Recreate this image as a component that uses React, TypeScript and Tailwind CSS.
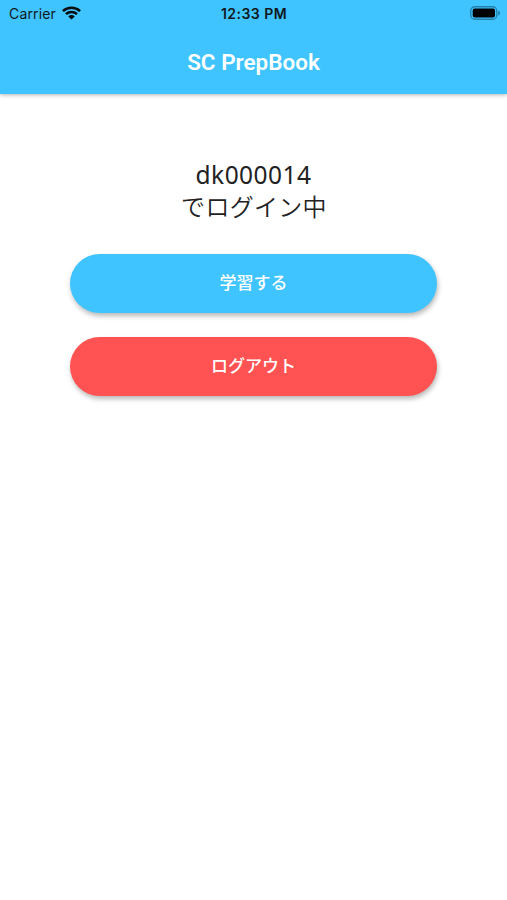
import type { ReactNode } from 'react';

function WifiIcon() {
  return (
    <svg width="19" height="14" viewBox="0 0 18 14" preserveAspectRatio="none" fill="none" stroke="#080d10" strokeWidth="2.5">
      <path d="M0.9 5.1a11.6 11.6 0 0 1 16.2 0" />
      <path d="M3.8 8.2a7.4 7.4 0 0 1 10.4 0" />
      <path d="M9 13.6L5.9 10.4a4.4 4.4 0 0 1 6.2 0z" fill="#080d10" stroke="none" />
    </svg>
  );
}

function BatteryIcon() {
  return (
    <svg width="31" height="14" viewBox="0 0 31 14" fill="none">
      <rect x="0.75" y="0.75" width="26" height="12.5" rx="4" stroke="#2380ab" strokeWidth="1.3" />
      <rect x="2.7" y="2.5" width="22.3" height="9" rx="2" fill="#000" />
      <path d="M28.2 4.4c2.4 1 2.4 4.2 0 5.2z" fill="#2380ab" />
    </svg>
  );
}

function StatusBar() {
  return (
    <div className="grid h-7 grid-cols-3 items-center pl-[9px] pr-[6px] font-['Inter','Liberation_Sans',sans-serif] text-[14px] leading-none text-[#10181d]">
      <div className="-mt-0.5 flex items-center gap-[6px]">
        <span className="pt-px tracking-[0.15px]">Carrier</span>
        <WifiIcon />
      </div>
      <span className="-ml-0.5 text-center font-semibold tracking-[0.45px]">12:33 PM</span>
      <div className="-mt-0.5 flex justify-end">
        <BatteryIcon />
      </div>
    </div>
  );
}

function PillButton({ className, children }: { className: string; children: ReactNode }) {
  return (
    <button
      className={`h-[58.5px] w-full rounded-full pt-px text-[17px] font-medium text-white shadow-[1px_3px_5px_rgba(0,0,0,0.28)] ${className}`}
    >
      {children}
    </button>
  );
}

export default function App() {
  return (
    <div className="min-h-screen bg-white font-['Roboto','Noto_Sans_CJK_JP',sans-serif]">
      <header className="h-[94px] bg-[#40c4ff] shadow-[0_1px_4px_rgba(0,0,0,0.3)]">
        <StatusBar />
        <h1 className="pt-[17px] text-center text-[22.5px] leading-[34px] font-semibold text-white">SC PrepBook</h1>
      </header>
      <main className="px-[70px] pt-[65px]">
        <p className="text-center text-[#222]">
          <span className="block font-['Noto_Sans',sans-serif] text-[24.5px] leading-[31px] tracking-[0.45px]">dk000014</span>
          <span className="block pl-px font-['Noto_Sans_CJK_JP',sans-serif] text-[24px] leading-[32px] font-[350] tracking-[0.3px]">
            でログイン中
          </span>
        </p>
        <div className="mt-8 flex flex-col gap-[24.5px]">
          <PillButton className="bg-[#40c4ff]">学習する</PillButton>
          <PillButton className="bg-[#ff5252]">ログアウト</PillButton>
        </div>
      </main>
    </div>
  );
}
